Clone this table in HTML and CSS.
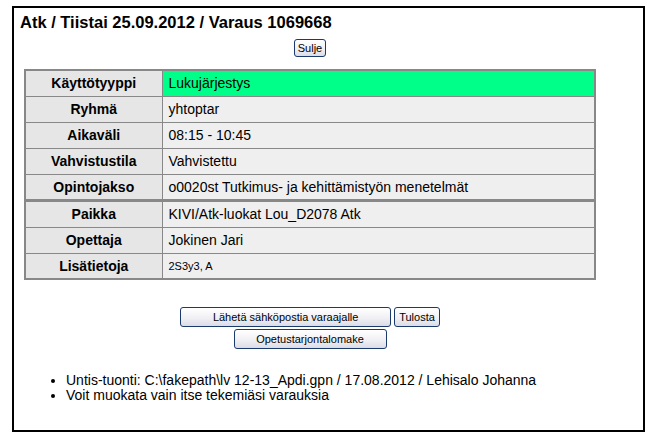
FILE: index.html
```html
<!DOCTYPE html>
<html>
<head>
<meta charset="utf-8">
<link rel="stylesheet" href="styles.css">
</head>
<body>
<div class="frame">
  <div class="content">
    <h1 class="title">Atk / Tiistai 25.09.2012 / Varaus 1069668</h1>
    <div class="center"><button class="btn btn-small">Sulje</button></div>
    <table class="info">
      <tr><th>Käyttötyyppi</th><td class="green">Lukujärjestys</td></tr>
      <tr><th>Ryhmä</th><td>yhtoptar</td></tr>
      <tr><th>Aikaväli</th><td>08:15 - 10:45</td></tr>
      <tr><th>Vahvistustila</th><td>Vahvistettu</td></tr>
      <tr><th>Opintojakso</th><td>o0020st Tutkimus- ja kehittämistyön menetelmät</td></tr>
      <tr class="sep"><th>Paikka</th><td>KIVI/Atk-luokat Lou_D2078 Atk</td></tr>
      <tr><th>Opettaja</th><td>Jokinen Jari</td></tr>
      <tr><th>Lisätietoja</th><td class="small">2S3y3, A</td></tr>
    </table>
    <div class="actions">
      <div class="row">
        <button class="btn btn-wide">Lähetä sähköpostia varaajalle</button>
        <button class="btn">Tulosta</button>
      </div>
      <div class="row">
        <button class="btn btn-mid">Opetustarjontalomake</button>
      </div>
    </div>
    <ul class="notes">
      <li>Untis-tuonti: C:\fakepath\lv 12-13_Apdi.gpn / 17.08.2012 / Lehisalo Johanna</li>
      <li>Voit muokata vain itse tekemiäsi varauksia</li>
    </ul>
  </div>
</div>
</body>
</html>
```
FILE: styles.css
```css
html, body {
  margin: 0;
  padding: 0;
  background: #ffffff;
}
body {
  font-family: Arial, "Liberation Sans", sans-serif;
  color: #000;
  padding: 6px 0 0 12px;
}
.frame {
  width: 629px;
  height: 422px;
  border: 2px solid #000;
}
.content {
  width: 580px;
  padding: 4px 0 0 6px;
}
.title {
  margin: 0;
  font-size: 16.5px;
  line-height: 20px;
  font-weight: bold;
}
.center {
  display: flex;
  justify-content: center;
  margin-top: 7px;
}
.btn {
  font-family: Arial, "Liberation Sans", sans-serif;
  font-size: 11px;
  color: #000;
  height: 20px;
  padding: 0 4px;
  border: 1px solid #1a3a6e;
  border-radius: 3px;
  background: linear-gradient(#ffffff 0%, #f2f2f6 50%, #dcdce8 100%);
  line-height: 16px;
}
.btn-small {
  height: 18px;
  padding: 0 3px;
}
.btn-wide { width: 211px; }
.btn-mid { width: 153px; }
.info {
  margin: 12px auto 0;
  width: 572px;
  border-collapse: collapse;
  border: 2px solid #888;
  font-size: 14px;
}
.info th, .info td {
  border: 1px solid #888;
  height: 26px;
  padding: 0 6px;
  box-sizing: border-box;
}
.info th {
  width: 137px;
  background: #e6e6e6;
  font-weight: bold;
  text-align: center;
}
.info td {
  background: #efefef;
  text-align: left;
}
.info td.green { background: #00ff88; }
.info td.small { font-size: 11px; }
.info tr.sep th, .info tr.sep td { border-top: 3px solid #888; height: 27px; }
.actions {
  margin-top: 27px;
  display: flex;
  flex-direction: column;
  align-items: center;
  gap: 2px;
}
.row {
  display: flex;
  gap: 3px;
}
.notes {
  margin: 24px 0 0 0;
  padding-left: 46px;
  font-size: 14px;
  line-height: 15px;
}
```
